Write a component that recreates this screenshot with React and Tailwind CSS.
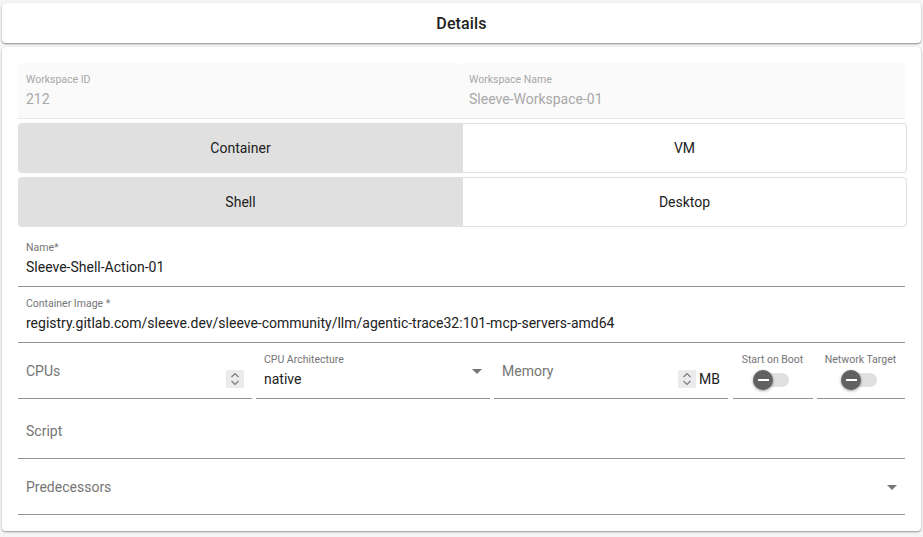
const font = "font-['Roboto',sans-serif]"

function ToggleRow({ left, right, className = '' }) {
  return (
    <div className={`flex h-[50px] w-[889px] ${className}`}>
      <div className="flex w-[445px] items-center justify-center rounded-l bg-[#e0e0e0] text-sm text-[#212121]">{left}</div>
      <div className="flex flex-1 items-center justify-center rounded-r border border-l-0 border-[#e0e0e0] bg-white text-sm text-[#212121]">{right}</div>
    </div>
  )
}

function Field({ label, value, className = '' }) {
  return (
    <div className={`flex h-12 w-[887px] flex-col border-b border-[#949494] px-2 ${className}`}>
      <div className="mt-[2px] h-[14px] text-[10.5px] leading-[14px] text-[#757575]">{label}</div>
      <div className="mt-[2px] text-sm leading-5 text-[#212121]">{value}</div>
    </div>
  )
}

function Spinner() {
  return (
    <div className="h-[18px] w-[18px] bg-[#ebebee]">
      <svg width="18" height="18" viewBox="0 0 18 18" fill="none" stroke="#7d7d7d" strokeWidth="1.2">
        <path d="M5.5 7 9 3.5 12.5 7" />
        <path d="M5.5 11 9 14.5 12.5 11" />
      </svg>
    </div>
  )
}

function Caret() {
  return <div className="h-0 w-0 border-x-[5px] border-t-[5px] border-x-transparent border-t-[#757575]" />
}

function Switch({ label, className = '' }) {
  return (
    <div className={`flex h-12 flex-col items-center border-b border-[#949494] pr-px ${className}`}>
      <div className="mt-[2px] text-[10.5px] leading-[14px] text-[#757575]">{label}</div>
      <div className="relative mt-[6px] h-[14px] w-[33px] rounded-full bg-[#e0e0e0]">
        <div className="absolute -top-[3px] -left-[3px] flex h-5 w-5 items-center justify-center rounded-full bg-[#616161] shadow-[0_1px_3px_rgba(0,0,0,0.4)]">
          <div className="h-[2px] w-[11px] bg-white" />
        </div>
      </div>
    </div>
  )
}

export default function App() {
  return (
    <div className={`h-[537px] w-[923px] overflow-hidden bg-[#f5f5f5] px-[2px] pt-[3px] ${font}`}>
      <div className="flex h-10 items-center justify-center rounded bg-white pt-px text-base font-medium tracking-[0.15px] text-[#212121] shadow-[0_1px_2px_rgba(0,0,0,0.45)]">
        Details
      </div>

      <div className="mt-1 flex h-[484px] flex-col rounded bg-white px-4 pt-4 shadow-[0_1px_2px_rgba(0,0,0,0.4)]">
        <div className="flex h-14 w-[887px]">
          <div className="w-[443px] rounded-t border-b border-[#e8e8e8] bg-[#fafafa] px-2">
            <div className="mt-[10px] text-[10.5px] leading-[14px] text-[#a8a8a8]">Workspace ID</div>
            <div className="mt-[2px] text-sm leading-5 text-[#a8a8a8]">212</div>
          </div>
          <div className="flex-1 rounded-t border-b border-[#e8e8e8] bg-[#fafafa] px-2">
            <div className="mt-[10px] text-[10.5px] leading-[14px] text-[#a8a8a8]">Workspace Name</div>
            <div className="mt-[2px] text-sm leading-5 text-[#a8a8a8]">Sleeve-Workspace-01</div>
          </div>
        </div>

        <ToggleRow left="Container" right="VM" className="mt-1" />
        <ToggleRow left="Shell" right="Desktop" className="mt-1" />

        <Field label="Name*" value="Sleeve-Shell-Action-01" className="mt-3" />
        <Field
          label="Container Image *"
          value="registry.gitlab.com/sleeve.dev/sleeve-community/llm/agentic-trace32:101-mcp-servers-amd64"
          className="mt-2"
        />

        <div className="mt-2 flex w-[888px]">
          <div className="flex h-12 w-[234px] items-center justify-between border-b border-[#949494] px-2">
            <span className="mt-[-8px] text-sm text-[#757575]">CPUs</span>
            <div className="mt-[8px]"><Spinner /></div>
          </div>
          <div className="ml-1 flex h-12 w-[234px] items-center justify-between border-b border-[#949494] px-2">
            <div className="mt-[-8px]">
              <div className="text-[10.5px] leading-[14px] text-[#757575]">CPU Architecture</div>
              <div className="mt-[2px] text-sm leading-5 text-[#212121]">native</div>
            </div>
            <div className="mt-[-6px]"><Caret /></div>
          </div>
          <div className="ml-1 flex h-12 w-[234px] items-center border-b border-[#949494] pl-2">
            <span className="mt-[-8px] flex-1 text-sm text-[#757575]">Memory</span>
            <div className="mt-[8px]"><Spinner /></div>
            <span className="mt-[8px] mr-[8px] ml-[3px] text-sm leading-5 text-[#212121]">MB</span>
          </div>
          <Switch label="Start on Boot" className="ml-[5px] w-20" />
          <Switch label="Network Target" className="ml-1 w-[88px]" />
        </div>

        <div className="mt-3 flex h-12 w-[887px] items-center border-b border-[#949494] px-2 text-sm text-[#757575]">
          <span className="-mt-2">Script</span>
        </div>
        <div className="mt-2 flex h-12 w-[887px] items-center justify-between border-b border-[#949494] px-2 text-sm text-[#757575]">
          <span className="-mt-2">Predecessors</span>
          <div className="mt-[-6px]"><Caret /></div>
        </div>
      </div>
    </div>
  )
}
